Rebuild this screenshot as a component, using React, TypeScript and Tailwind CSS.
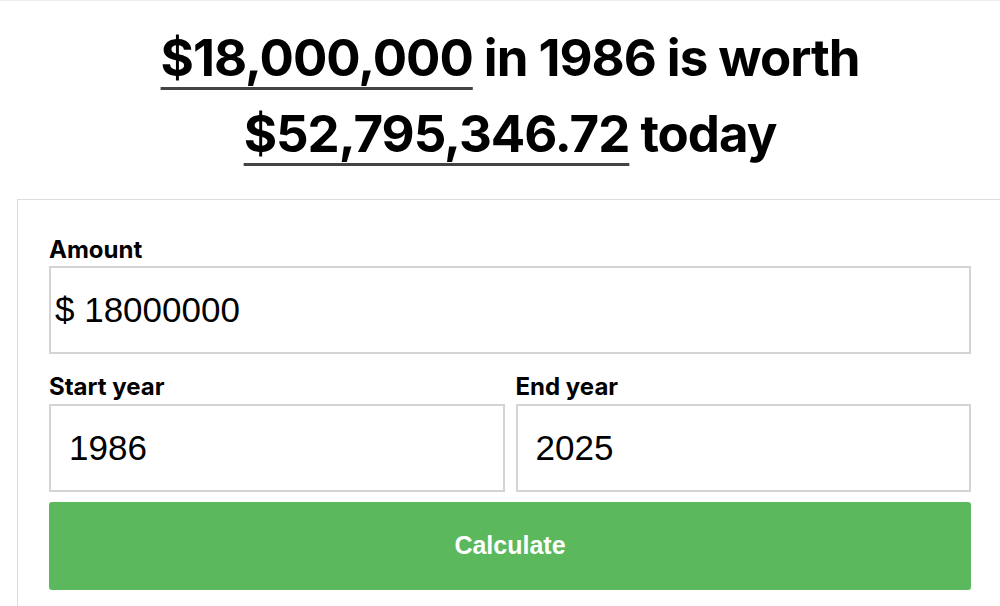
export default function App() {
  return (
    <div className="min-h-screen bg-white overflow-hidden border-t border-[#eeeeee]">
      <h1
        className="pl-[20px] pt-[19px] pb-[27px] text-center text-[51px] font-bold leading-[76px] tracking-[-0.02em] text-black"
        style={{ fontFamily: "Inter, 'Noto Sans', sans-serif" }}
      >
        <span className="underline decoration-[#444] decoration-[3px] underline-offset-[11px]">
          $18,000,000
        </span>{" "}
        in 1986 is worth
        <br />
        <span className="underline decoration-[#444] decoration-[3px] underline-offset-[11px]">
          $52,795,346.72
        </span>{" "}
        today
      </h1>

      <div className="ml-[17px] -mr-[40px] border border-[#dddddd] pl-[31px] pr-[68px] pt-[34px] pb-8">
        <div
          className="text-[24px] font-bold leading-[32px] text-black"
          style={{ fontFamily: "Inter, 'Liberation Sans', sans-serif" }}
        >
          Amount
        </div>
        <div className="flex h-[88px] items-center border-2 border-[#d4d4d4] px-[4px]">
          <span className="text-[35px] text-black" style={{ fontFamily: "'Liberation Sans', Arial, sans-serif" }}>
            $ 18000000
          </span>
        </div>

        <div className="mt-[16px] grid grid-cols-2 gap-[11px]">
          {[
            ["Start year", "1986"],
            ["End year", "2025"],
          ].map(([label, value]) => (
            <div key={label}>
              <div
                className="text-[24px] font-bold leading-[34px] text-black"
                style={{ fontFamily: "Inter, 'Liberation Sans', sans-serif" }}
              >
                {label}
              </div>
              <div className="flex h-[88px] items-center border-2 border-[#d4d4d4] px-[18px]">
                <span className="text-[35px] text-black" style={{ fontFamily: "'Liberation Sans', Arial, sans-serif" }}>
                  {value}
                </span>
              </div>
            </div>
          ))}
        </div>

        <button
          type="button"
          className="mt-[10px] flex h-[88px] w-full items-center justify-center rounded-[3px] bg-[#5cb85c] text-[25px] font-bold text-white"
          style={{ fontFamily: "'Liberation Sans', Arial, sans-serif" }}
        >
          Calculate
        </button>
      </div>
    </div>
  );
}
